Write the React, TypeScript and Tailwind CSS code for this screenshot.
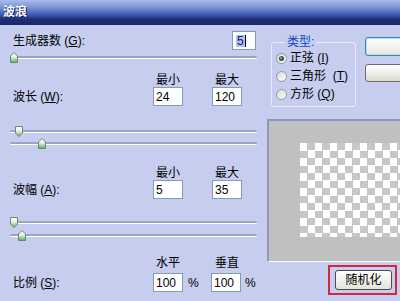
import React from 'react';

const Thumb: React.FC<{ up?: boolean }> = ({ up }) => (
  <svg width="8" height="11" viewBox="0 0 8 11" className="block">
    <defs>
      <linearGradient id="thumbFill" x1="0" y1="0" x2="0" y2="1">
        <stop offset="0" stopColor="#ffffff" />
        <stop offset="0.45" stopColor="#e6f2e2" />
        <stop offset="1" stopColor="#52b058" />
      </linearGradient>
    </defs>
    <path
      d={up ? 'M4 0.5 L7.5 4 V10.5 H0.5 V4 Z' : 'M0.5 0.5 H7.5 V7 L4 10.5 L0.5 7 Z'}
      fill="url(#thumbFill)"
      stroke="#6f8474"
      strokeWidth="1"
    />
  </svg>
);

const Slider: React.FC<{ thumbClass: string; up?: boolean; className: string }> = ({
  thumbClass,
  up,
  className,
}) => (
  <div className={`relative h-[11px] ${className}`}>
    <div className="absolute left-0 right-0 top-[4px] h-[3px] rounded-full border-t-2 border-[#9ba3c3] bg-white" />
    <div className={`relative w-[8px] ${thumbClass}`}>
      <Thumb up={up} />
    </div>
  </div>
);

const Radio: React.FC<{ checked?: boolean }> = ({ checked }) => (
  <svg width="11" height="11" viewBox="0 0 11 11" className="block shrink-0">
    <defs>
      <linearGradient id="radioFill" x1="0" y1="0" x2="1" y2="1">
        <stop offset="0" stopColor="#d8d8d0" />
        <stop offset="1" stopColor="#ffffff" />
      </linearGradient>
    </defs>
    <circle cx="5.5" cy="5.5" r="5" fill="url(#radioFill)" stroke="#8b95ab" />
    {checked && <circle cx="5.5" cy="5.5" r="2.6" fill="#2f6a4c" />}
    {checked && <circle cx="4.8" cy="4.8" r="0.9" fill="#8fc7a2" />}
  </svg>
);

const Field: React.FC<{ value: string }> = ({ value }) => (
  <div className="flex h-[19px] w-[30px] items-center border border-[#7f9db9] bg-white pl-[2px] leading-none">
    {value}
  </div>
);

const Key: React.FC<{ k: string }> = ({ k }) => <span className="underline">{k}</span>;

const Header: React.FC<{ a: string; b: string; className: string }> = ({ a, b, className }) => (
  <div className={`flex h-[14px] items-center leading-[14px] ${className}`}>
    <div className="w-[143px]" />
    <div className="w-[59px]">
      <div className="w-[30px] text-center">{a}</div>
    </div>
    <div className="w-[30px] text-center">{b}</div>
  </div>
);

export default function App() {
  return (
    <div className="h-[301px] w-[400px] overflow-hidden bg-[#c6cdee] font-['Liberation_Sans','Noto_Sans_CJK_SC',sans-serif] text-[12px] text-black">
      <div className="h-[25px] bg-[linear-gradient(to_bottom,#a8bcec_0%,#7a92d4_30%,#3c58ac_60%,#1d2c72_78%,#1a2869_100%)] pl-[3px] pt-[5px] font-bold leading-[14px] text-white [text-shadow:1px_1px_0_#0c1a50]">
        波浪
      </div>

      <div className="flex pl-[10px]">
        {/* left column */}
        <div className="w-[247px] shrink-0">
          <div className="mt-[6px] flex h-[19px] items-center justify-between pl-[3px] pr-[1px]">
            <span>
              生成器数 (<Key k="G" />):
            </span>
            <div className="flex h-[19px] w-[24px] items-center border border-[#7f9db9] bg-white pl-[3px] leading-none">
              <span className="bg-[#b4c2ea] px-px text-[#10206a]">5</span>
              <span className="h-[12px] w-px bg-black" />
            </div>
          </div>
          <Slider className="mt-[2px]" thumbClass="ml-0" up />

          <Header className="mt-[10px]" a="最小" b="最大" />
          <div className="flex h-[19px] items-center">
            <div className="w-[143px] pl-[3px]">
              波长 (<Key k="W" />):
            </div>
            <div className="w-[59px]">
              <Field value="24" />
            </div>
            <Field value="120" />
          </div>
          <Slider className="mt-[20px]" thumbClass="ml-[5px]" />
          <Slider className="mt-[1px]" thumbClass="ml-[28px]" up />

          <Header className="mt-[17px]" a="最小" b="最大" />
          <div className="flex h-[19px] items-center">
            <div className="w-[143px] pl-[3px]">
              波幅 (<Key k="A" />):
            </div>
            <div className="w-[59px]">
              <Field value="5" />
            </div>
            <Field value="35" />
          </div>
          <Slider className="mt-[18px]" thumbClass="ml-0" />
          <Slider className="mt-[2px]" thumbClass="ml-[8px]" up />

          <Header className="mt-[15px]" a="水平" b="垂直" />
          <div className="mt-[3px] flex h-[19px] items-center">
            <div className="w-[143px] pl-[3px]">
              比例 (<Key k="S" />):
            </div>
            <div className="flex w-[58px] items-center">
              <Field value="100" />
              <span className="ml-[5px]">%</span>
            </div>
            <Field value="100" />
            <span className="ml-[4px]">%</span>
          </div>
        </div>

        {/* right column */}
        <div className="ml-[10px] w-[200px] shrink-0">
          <div className="flex items-start">
            <fieldset className="ml-[4px] mt-[10px] w-[85px] shrink-0 rounded-[3px] border border-[#e9ecf7] pb-[3px]">
              <legend className="ml-[13px] px-[2px] leading-[14px] text-[#1646c8]">类型:</legend>
              <div className="flex h-[18px] items-center gap-[3px] pl-[4px]">
                <Radio checked />
                <span>
                  正弦 (<Key k="I" />)
                </span>
              </div>
              <div className="flex h-[18px] items-center gap-[3px] pl-[4px]">
                <Radio />
                <span className="whitespace-pre">
                  三角形  (<Key k="T" />)
                </span>
              </div>
              <div className="flex h-[18px] items-center gap-[3px] pl-[4px]">
                <Radio />
                <span>
                  方形 (<Key k="Q" />)
                </span>
              </div>
            </fieldset>
            <div className="ml-[9px] mt-[12px] shrink-0">
              <div className="h-[19px] w-[80px] rounded-[3px] border border-[#3f86ad] bg-[linear-gradient(to_bottom,#ffffff,#e6e6e0)] shadow-[inset_0_0_0_1px_#b8dcf0]" />
              <div className="mt-[8px] h-[18px] w-[80px] rounded-[3px] border border-[#6b6b6b] bg-[linear-gradient(to_bottom,#ffffff,#dcdcd4)]" />
            </div>
          </div>

          <div className="mt-[12px] h-[143px] w-[150px] border-b border-l-2 border-t-2 border-b-white border-l-[#8e98bc] border-t-[#8e98bc] bg-[#c0c0c0]">
            <div className="ml-[31px] mt-[22px] h-[94px] w-[120px] bg-[conic-gradient(#c7c7c7_90deg,#ffffff_90deg_180deg,#c7c7c7_180deg_270deg,#ffffff_270deg)] bg-[length:15px_15px]" />
          </div>

          <div className="ml-[61px] mt-[3px] w-[69px] border-2 border-[#cf2a36] pb-[3px] pl-[5px] pr-[3px] pt-[3px]">
            <div className="flex h-[20px] w-[57px] items-center justify-center rounded-[3px] border border-[#4b4b4b] bg-[linear-gradient(to_bottom,#ffffff,#e4e4dc)] leading-none">
              随机化
            </div>
          </div>
        </div>
      </div>
    </div>
  );
}
